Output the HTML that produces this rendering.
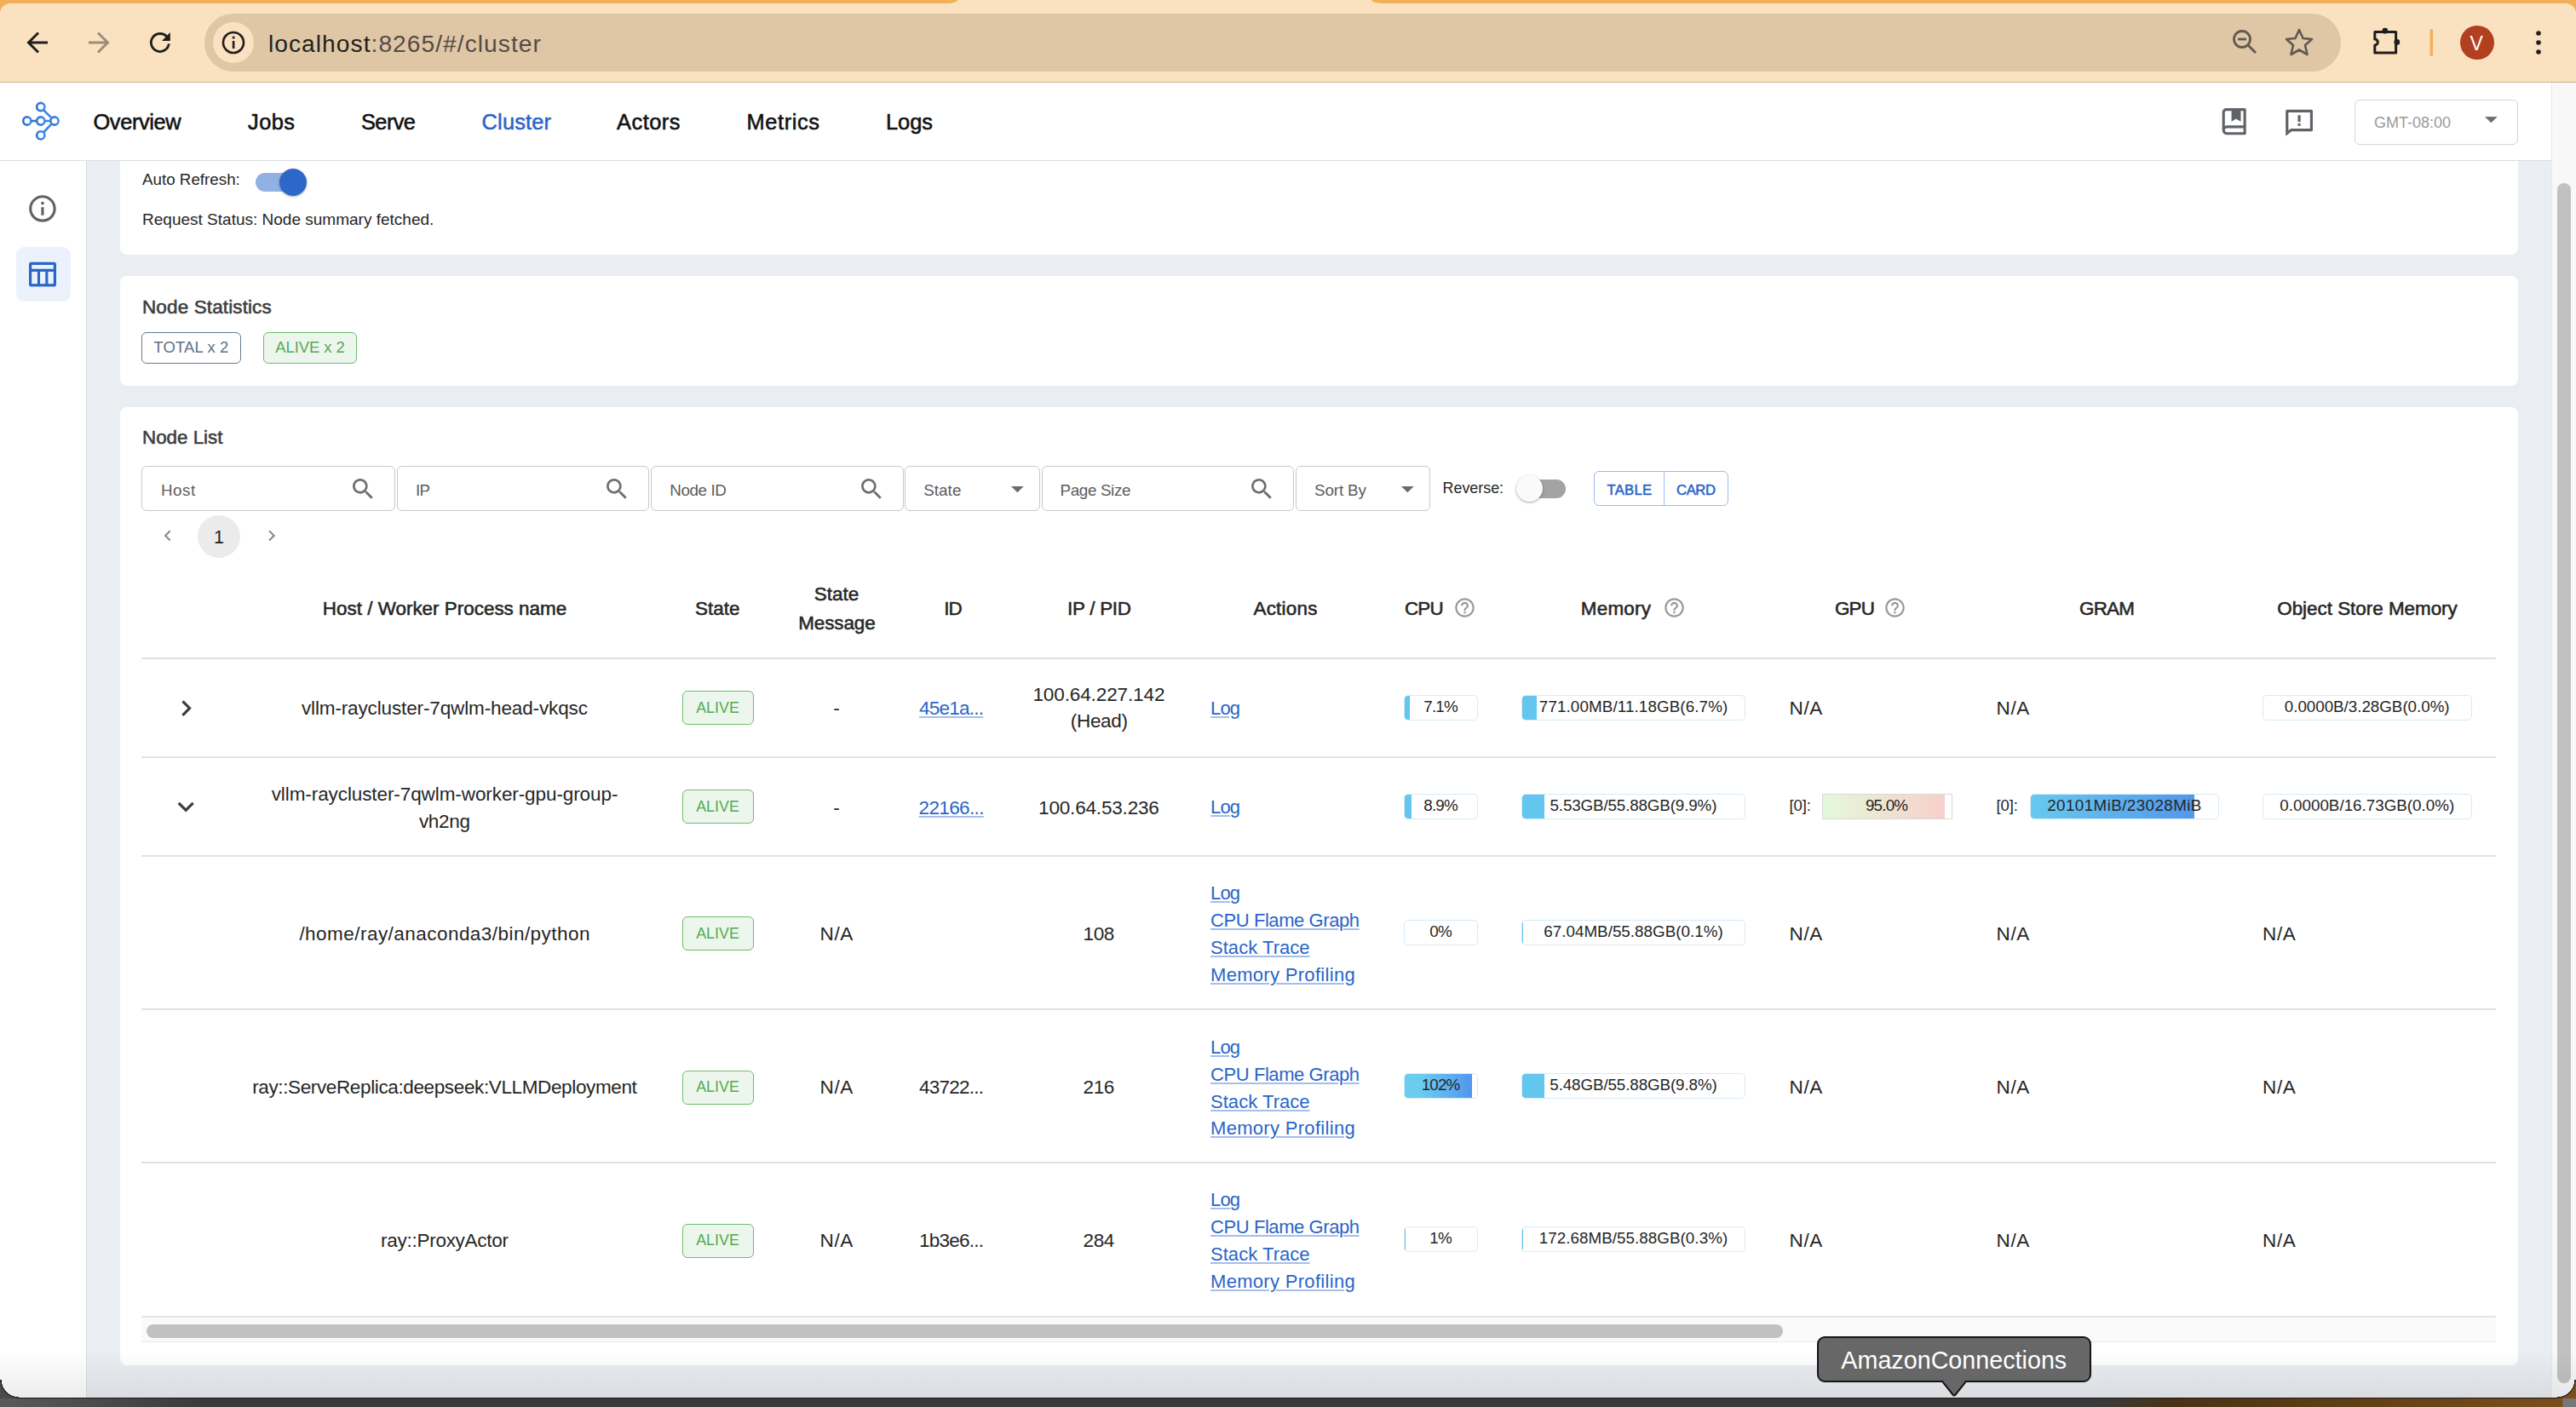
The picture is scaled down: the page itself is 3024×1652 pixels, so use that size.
<!DOCTYPE html><html><head><meta charset='utf-8'><title>Ray Dashboard</title><style>
*{box-sizing:border-box;margin:0;padding:0}
html,body{width:3024px;height:1652px;overflow:hidden;background:#3a3a3a;font-family:"Liberation Sans", sans-serif;color:#262626}
.a{position:absolute}
.t{position:absolute;white-space:nowrap;line-height:1}
.med{-webkit-text-stroke:0.55px currentColor}
.card{position:absolute;background:#fff;border-radius:8px}
.inp{position:absolute;top:547px;height:53px;border:1.3px solid #c9c9c9;border-radius:6px;background:#fff}
.chip{position:absolute;width:84px;height:40px;border:1.5px solid #6bbd6b;background:#edf6ec;border-radius:6px}
.bar{position:absolute;height:30px;border:1px solid #d6eaf8;border-radius:5px;background:#fff;overflow:hidden}
.bar .f{position:absolute;left:0;top:0;bottom:0;background:#62c6ee}
.lnk{color:#2a65c8;text-decoration:underline;text-decoration-color:rgba(42,101,200,0.42);text-underline-offset:1.8px;text-decoration-thickness:1.7px}
</style></head><body>
<div class='a' style='left:0;top:0;width:3024px;height:24px;background:#f3b05a'></div>
<div class='a' style='left:0;top:4px;width:3024px;height:93px;background:#fae1bf;border-top-left-radius:12px;border-top-right-radius:12px;border-bottom:1.5px solid #cdb48f'></div>
<div class='a' style='left:1100px;top:0;width:534px;height:6px;background:#fae1bf'></div>
<div class='a' style='left:1060px;top:0;width:64px;height:4.3px;background:#f3b05a;border-bottom-right-radius:14px 4.3px'></div>
<div class='a' style='left:1610px;top:0;width:64px;height:4.3px;background:#f3b05a;border-bottom-left-radius:14px 4.3px'></div>
<div class='a' style='left:240px;top:16px;width:2508px;height:68px;border-radius:34px;background:#dfc6a5'></div>
<div class='a' style='left:250px;top:26px;width:48px;height:48px;border-radius:50%;background:#fae1bf'></div>
<svg class='a' style='left:0;top:0' width='3024' height='97' viewBox='0 0 3024 97'>
<g fill='none' stroke='#1f1f1f' stroke-width='3'>
 <path d='M56 50 H34 M45 38.5 L33.5 50 L45 61.5'/>
</g>
<g fill='none' stroke='#9c8e7b' stroke-width='3'>
 <path d='M104 50 H126 M115 38.5 L126.5 50 L115 61.5'/>
</g>
<g fill='none' stroke='#1f1f1f' stroke-width='2.8'>
 <path d='M198.3 51.4 A10.5 10.5 0 1 1 195.9 43.2'/>
</g>
<path d='M199.8 38.1 V47.9 H190 Z' fill='#1f1f1f'/>
<circle cx='274' cy='50' r='12' fill='none' stroke='#1f1f1f' stroke-width='2.6'/>
<rect x='272.8' y='48' width='2.6' height='9' fill='#1f1f1f'/>
<circle cx='274.1' cy='44' r='1.6' fill='#1f1f1f'/>
<g fill='none' stroke='#5f5a52' stroke-width='2.8'>
 <circle cx='2632' cy='46' r='9.5'/>
 <path d='M2639 53 L2648 62'/>
 <path d='M2627 46 H2637'/>
</g>
<path d='M2699 35 L2703.5 45 L2714 46 L2706 53 L2708.5 64 L2699 58.5 L2689.5 64 L2692 53 L2684 46 L2694.5 45 Z' fill='none' stroke='#5f5a52' stroke-width='2.6' stroke-linejoin='round'/>
<path d='M2787.8 37.5 H2812.6 V62 H2787.8 V53 A3.5 3.5 0 0 0 2787.8 46 Z' fill='none' stroke='#1f1f1f' stroke-width='3' stroke-linejoin='round'/>
<circle cx='2799.8' cy='36.2' r='3.4' fill='#1f1f1f'/><circle cx='2813.8' cy='49.5' r='3.4' fill='#1f1f1f'/>
<rect x='2852.5' y='34' width='3.5' height='32' rx='1.7' fill='#f3b05a'/>
<circle cx='2908' cy='50' r='20' fill='#b23f1f'/>
<circle cx='2980' cy='39' r='2.8' fill='#1f1f1f'/><circle cx='2980' cy='50' r='2.8' fill='#1f1f1f'/><circle cx='2980' cy='61' r='2.8' fill='#1f1f1f'/>
</svg>
<div class='t' style='left:2899.5px;top:39.7px;font-size:23px;color:#fff'>V</div>
<div class='t' style='left:315.0px;top:36.9px;font-size:28.2px;letter-spacing:1.03px;color:#1f1f1f'>localhost<span style='color:#524c46'>:8265/#/cluster</span></div>
<div class='a' style='left:0;top:97px;width:2995px;height:92px;background:#fff;border-bottom:1.5px solid #d8dee6'></div>
<svg class='a' style='left:0;top:97px' width='100' height='92' viewBox='0 97 100 92'>
<defs><linearGradient id='lg' x1='0' y1='0' x2='1' y2='0'><stop offset='0' stop-color='#2f6fd0'/><stop offset='1' stop-color='#3f8fe6'/></linearGradient></defs>
<g fill='none' stroke='url(#lg)' stroke-width='2.6'>
<circle cx='47.8' cy='125.5' r='4.6'/><circle cx='31.8' cy='142' r='4.6'/><circle cx='47.8' cy='142' r='4.6'/><circle cx='64' cy='142' r='4.6'/><circle cx='47.8' cy='158.9' r='4.6'/>
<path d='M36.4 142 H43.2 M52.4 142 H59.4 M51 129 L61 139 M51 155.5 L61 145'/>
</g></svg>
<div class='t med' style='left:109.5px;top:131.4px;font-size:25.4px;letter-spacing:-0.38px;color:#111'>Overview</div>
<div class='t med' style='left:291.0px;top:131.4px;font-size:25.4px;letter-spacing:0.45px;color:#111'>Jobs</div>
<div class='t med' style='left:424.0px;top:131.4px;font-size:25.4px;letter-spacing:-0.59px;color:#111'>Serve</div>
<div class='t med' style='left:565.6px;top:131.4px;font-size:25.4px;letter-spacing:0.16px;color:#2a65c8'>Cluster</div>
<div class='t med' style='left:724.0px;top:131.4px;font-size:25.4px;letter-spacing:0.50px;color:#111'>Actors</div>
<div class='t med' style='left:876.5px;top:131.4px;font-size:25.4px;letter-spacing:0.61px;color:#111'>Metrics</div>
<div class='t med' style='left:1040.0px;top:131.4px;font-size:25.4px;letter-spacing:-0.02px;color:#111'>Logs</div>
<svg class='a' style='left:2604.3px;top:124.2px' width='37.4' height='37.4' viewBox='0 0 24 24'><path fill='#5f6368' d='M20 22H6.5A3.5 3.5 0 0 1 3 18.5V5a3 3 0 0 1 3-3h14a1 1 0 0 1 1 1v18a1 1 0 0 1-1 1zm-1-2v-3H6.5a1.5 1.5 0 0 0 0 3H19zM10 4H6a1 1 0 0 0-1 1v10.337A3.486 3.486 0 0 1 6.5 15H19V4h-2v8l-3.5-2-3.5 2V4z'/></svg>
<svg class='a' style='left:2680px;top:124px' width='38.2' height='38.2' viewBox='0 0 24 24'><path fill='#5f6368' d='M6.455 19L2 22.5V4a1 1 0 0 1 1-1h18a1 1 0 0 1 1 1v14a1 1 0 0 1-1 1H6.455zm-.692-2H20V5H4v13.385L5.763 17zM11 13h2v2h-2v-2zm0-6h2v5h-2V7z'/></svg>
<div class='a' style='left:2764px;top:117px;width:192px;height:53px;border:1.3px solid #cfd7e2;border-radius:6px'></div>
<div class='t' style='left:2787.0px;top:135.3px;font-size:18px;letter-spacing:-0.00px;color:#9a9a9a'>GMT-08:00</div>
<svg class='a' style='left:2916.6px;top:137.3px' width='15' height='8'><path d='M0 0 H14.7 L7.35 7.35 Z' fill='#707070'/></svg>
<div class='a' style='left:0;top:189px;width:102px;height:1452px;background:#fff;border-right:1.5px solid #d8dee6'></div>
<svg class='a' style='left:31.2px;top:226px' width='37.9' height='37.9' viewBox='0 0 24 24'><path fill='#5f6368' d='M11 7h2v2h-2zm0 4h2v6h-2zm1-9C6.48 2 2 6.48 2 12s4.48 10 10 10 10-4.48 10-10S17.52 2 12 2zm0 18c-4.41 0-8-3.59-8-8s3.59-8 8-8 8 3.59 8 8-3.59 8-8 8z'/></svg>
<div class='a' style='left:19px;top:290px;width:64px;height:64px;border-radius:9px;background:#ebf2fb'></div>
<svg class='a' style='left:30px;top:303px' width='40' height='40' viewBox='30 303 40 40'>
<rect x='35.6' y='309.3' width='28.8' height='25.6' rx='1.2' fill='none' stroke='#2a65c8' stroke-width='3.2'/>
<path d='M35.6 317.4 H64.4 M45.5 317.4 V335 M54.85 317.4 V335' fill='none' stroke='#2a65c8' stroke-width='3.1'/>
</svg>
<div class='a' style='left:102px;top:189px;width:2893px;height:1452px;background:#eaedf1'></div>
<div class='card' style='left:141px;top:189px;width:2815px;height:110px;border-top-left-radius:0;border-top-right-radius:0'></div>
<div class='t' style='left:167.0px;top:202.1px;font-size:18.8px;letter-spacing:0.00px;'>Auto Refresh:</div>
<div class='a' style='left:300px;top:203px;width:56px;height:22px;border-radius:11px;background:#92b1e3'></div>
<div class='a' style='left:328px;top:198px;width:32px;height:32px;border-radius:50%;background:#2d68c9;box-shadow:0 1px 3px rgba(0,0,0,0.3)'></div>
<div class='t' style='left:167.0px;top:247.9px;font-size:19.05px;letter-spacing:-0.01px;'>Request Status: Node summary fetched.</div>
<div class='card' style='left:141px;top:324px;width:2815px;height:129px'></div>
<div class='t med' style='left:167.0px;top:349.5px;font-size:22.5px;letter-spacing:0.12px;color:#3d3d3d'>Node Statistics</div>
<div class='a' style='left:166px;top:390px;width:117px;height:37px;border:1.5px solid #667b90;border-radius:6px'></div>
<div class='t' style='left:-275.6px;width:1000px;text-align:center;top:399.1px;font-size:18.5px;letter-spacing:0.12px;color:#5f7287'>TOTAL x 2</div>
<div class='a' style='left:309px;top:390px;width:110px;height:37px;border:1.5px solid #6bbd6b;background:#edf6ec;border-radius:6px'></div>
<div class='t' style='left:-136.0px;width:1000px;text-align:center;top:399.1px;font-size:18.5px;letter-spacing:-0.10px;color:#58a85b'>ALIVE x 2</div>
<div class='card' style='left:141px;top:477.5px;width:2815px;height:1125px'></div>
<div class='t med' style='left:167.0px;top:503.0px;font-size:22.4px;letter-spacing:-0.02px;color:#3d3d3d'>Node List</div>
<div class='inp' style='left:166.4px;width:297.6px'></div>
<div class='t' style='left:189.0px;top:566.6px;font-size:18.8px;letter-spacing:0.55px;color:#5c5c5c'>Host</div>
<svg class='a' style='left:409.9px;top:558px' width='32.5' height='32.5' viewBox='0 0 24 24'><path fill='#6e6e6e' d='M15.5 14h-.79l-.28-.27C15.41 12.59 16 11.11 16 9.5 16 5.91 13.09 3 9.5 3S3 5.91 3 9.5 5.91 16 9.5 16c1.61 0 3.09-.59 4.23-1.57l.27.28v.79l5 4.99L20.49 19l-4.99-5zm-6 0C7.01 14 5 11.99 5 9.5S7.01 5 9.5 5 14 7.01 14 9.5 11.99 14 9.5 14z'/></svg>
<div class='inp' style='left:465.7px;width:296.3px'></div>
<div class='t' style='left:488.0px;top:566.6px;font-size:18.8px;letter-spacing:-0.76px;color:#5c5c5c'>IP</div>
<svg class='a' style='left:707.9px;top:558px' width='32.5' height='32.5' viewBox='0 0 24 24'><path fill='#6e6e6e' d='M15.5 14h-.79l-.28-.27C15.41 12.59 16 11.11 16 9.5 16 5.91 13.09 3 9.5 3S3 5.91 3 9.5 5.91 16 9.5 16c1.61 0 3.09-.59 4.23-1.57l.27.28v.79l5 4.99L20.49 19l-4.99-5zm-6 0C7.01 14 5 11.99 5 9.5S7.01 5 9.5 5 14 7.01 14 9.5 11.99 14 9.5 14z'/></svg>
<div class='inp' style='left:764px;width:297px'></div>
<div class='t' style='left:786.3px;top:566.6px;font-size:18.8px;letter-spacing:-0.38px;color:#5c5c5c'>Node ID</div>
<svg class='a' style='left:1006.9px;top:558px' width='32.5' height='32.5' viewBox='0 0 24 24'><path fill='#6e6e6e' d='M15.5 14h-.79l-.28-.27C15.41 12.59 16 11.11 16 9.5 16 5.91 13.09 3 9.5 3S3 5.91 3 9.5 5.91 16 9.5 16c1.61 0 3.09-.59 4.23-1.57l.27.28v.79l5 4.99L20.49 19l-4.99-5zm-6 0C7.01 14 5 11.99 5 9.5S7.01 5 9.5 5 14 7.01 14 9.5 11.99 14 9.5 14z'/></svg>
<div class='inp' style='left:1062.4px;width:158.5999999999999px'></div>
<div class='t' style='left:1084.2px;top:566.6px;font-size:18.8px;letter-spacing:0.08px;color:#5c5c5c'>State</div>
<svg class='a' style='left:1186.7px;top:570.5px' width='15' height='8'><path d='M0 0 H14.7 L7.35 7.35 Z' fill='#6b6b6b'/></svg>
<div class='inp' style='left:1222.7px;width:296.29999999999995px'></div>
<div class='t' style='left:1244.5px;top:566.6px;font-size:18.8px;letter-spacing:-0.34px;color:#5c5c5c'>Page Size</div>
<svg class='a' style='left:1464.9px;top:558px' width='32.5' height='32.5' viewBox='0 0 24 24'><path fill='#6e6e6e' d='M15.5 14h-.79l-.28-.27C15.41 12.59 16 11.11 16 9.5 16 5.91 13.09 3 9.5 3S3 5.91 3 9.5 5.91 16 9.5 16c1.61 0 3.09-.59 4.23-1.57l.27.28v.79l5 4.99L20.49 19l-4.99-5zm-6 0C7.01 14 5 11.99 5 9.5S7.01 5 9.5 5 14 7.01 14 9.5 11.99 14 9.5 14z'/></svg>
<div class='inp' style='left:1521px;width:158px'></div>
<div class='t' style='left:1543.0px;top:566.6px;font-size:18.8px;letter-spacing:-0.11px;color:#5c5c5c'>Sort By</div>
<svg class='a' style='left:1644.7px;top:570.5px' width='15' height='8'><path d='M0 0 H14.7 L7.35 7.35 Z' fill='#6b6b6b'/></svg>
<div class='t' style='left:1693.6px;top:564.8px;font-size:17.9px;letter-spacing:-0.02px;'>Reverse:</div>
<div class='a' style='left:1783px;top:563px;width:55px;height:22px;border-radius:11px;background:#a3a3a3'></div>
<div class='a' style='left:1779.5px;top:558px;width:31px;height:31px;border-radius:50%;background:#fafafa;box-shadow:0 1px 3px rgba(0,0,0,0.35)'></div>
<div class='a' style='left:1871.4px;top:553.4px;width:158px;height:41px;border:1.3px solid #9dbbe8;border-radius:6px'></div>
<div class='a' style='left:1952.5px;top:553.4px;width:1.3px;height:41px;background:#9dbbe8'></div>
<div class='t med' style='left:1886.6px;top:568.2px;font-size:16.6px;letter-spacing:0.26px;color:#2a65c8'>TABLE</div>
<div class='t med' style='left:1968.0px;top:568.2px;font-size:16.6px;letter-spacing:-0.35px;color:#2a65c8'>CARD</div>
<svg class='a' style='left:182px;top:614px' width='30' height='30' viewBox='0 0 24 24'><path fill='#8a8a8a' d='M15.41 16.59L10.83 12l4.58-4.59L14 6l-6 6 6 6 1.41-1.41z' transform='scale(0.85) translate(2,2)'/></svg>
<div class='a' style='left:232px;top:604.6px;width:50px;height:50px;border-radius:50%;background:#ebebeb'></div>
<div class='t' style='left:-243.0px;width:1000px;text-align:center;top:620.6px;font-size:21.5px;color:#222'>1</div>
<svg class='a' style='left:304px;top:614px' width='30' height='30' viewBox='0 0 24 24'><path fill='#8a8a8a' d='M8.59 16.59L13.17 12 8.59 7.41 10 6l6 6-6 6-1.41-1.41z' transform='scale(0.85) translate(2,2)'/></svg>
<div class='t med' style='left:22.0px;width:1000px;text-align:center;top:704.0px;font-size:22.4px;letter-spacing:0.02px;'>Host / Worker Process name</div>
<div class='t med' style='left:342.3px;width:1000px;text-align:center;top:704.0px;font-size:22.4px;letter-spacing:0.05px;'>State</div>
<div class='t med' style='left:482.0px;width:1000px;text-align:center;top:687.4px;font-size:22.4px;letter-spacing:0.02px;'>State</div>
<div class='t med' style='left:482.4px;width:1000px;text-align:center;top:720.8px;font-size:22.4px;letter-spacing:-0.08px;'>Message</div>
<div class='t med' style='left:618.6px;width:1000px;text-align:center;top:704.0px;font-size:22.4px;letter-spacing:-0.80px;'>ID</div>
<div class='t med' style='left:790.4px;width:1000px;text-align:center;top:704.0px;font-size:22.4px;letter-spacing:-0.25px;'>IP / PID</div>
<div class='t med' style='left:1009.1px;width:1000px;text-align:center;top:704.0px;font-size:22.4px;letter-spacing:0.26px;'>Actions</div>
<div class='t med' style='left:1649.0px;top:704.0px;font-size:22.4px;letter-spacing:-0.80px;'>CPU</div>
<svg class='a' style='left:1705.9px;top:700.2px' width='27.0' height='27.0' viewBox='0 0 24 24'><path fill='#9a9a9a' d='M11 18h2v-2h-2v2zm1-16C6.48 2 2 6.48 2 12s4.48 10 10 10 10-4.48 10-10S17.52 2 12 2zm0 18c-4.41 0-8-3.59-8-8s3.59-8 8-8 8 3.59 8 8-3.59 8-8 8zm0-14c-2.21 0-4 1.79-4 4h2c0-1.1.9-2 2-2s2 .9 2 2c0 2-3 1.75-3 5h2c0-2.25 3-2.5 3-5 0-2.21-1.79-4-4-4z'/></svg>
<div class='t med' style='left:1855.8px;top:704.0px;font-size:22.4px;letter-spacing:0.26px;'>Memory</div>
<svg class='a' style='left:1951.5px;top:700.2px' width='27.0' height='27.0' viewBox='0 0 24 24'><path fill='#9a9a9a' d='M11 18h2v-2h-2v2zm1-16C6.48 2 2 6.48 2 12s4.48 10 10 10 10-4.48 10-10S17.52 2 12 2zm0 18c-4.41 0-8-3.59-8-8s3.59-8 8-8 8 3.59 8 8-3.59 8-8 8zm0-14c-2.21 0-4 1.79-4 4h2c0-1.1.9-2 2-2s2 .9 2 2c0 2-3 1.75-3 5h2c0-2.25 3-2.5 3-5 0-2.21-1.79-4-4-4z'/></svg>
<div class='t med' style='left:2154.0px;top:704.0px;font-size:22.4px;letter-spacing:-0.80px;'>GPU</div>
<svg class='a' style='left:2211.2px;top:700.2px' width='27.0' height='27.0' viewBox='0 0 24 24'><path fill='#9a9a9a' d='M11 18h2v-2h-2v2zm1-16C6.48 2 2 6.48 2 12s4.48 10 10 10 10-4.48 10-10S17.52 2 12 2zm0 18c-4.41 0-8-3.59-8-8s3.59-8 8-8 8 3.59 8 8-3.59 8-8 8zm0-14c-2.21 0-4 1.79-4 4h2c0-1.1.9-2 2-2s2 .9 2 2c0 2-3 1.75-3 5h2c0-2.25 3-2.5 3-5 0-2.21-1.79-4-4-4z'/></svg>
<div class='t med' style='left:1973.1px;width:1000px;text-align:center;top:704.0px;font-size:22.4px;letter-spacing:-0.80px;'>GRAM</div>
<div class='t med' style='left:2279.0px;width:1000px;text-align:center;top:704.0px;font-size:22.4px;letter-spacing:-0.00px;'>Object Store Memory</div>
<div class='a' style='left:166px;top:772.4px;width:2764px;height:1.3px;background:#e2e2e2'></div>
<div class='a' style='left:166px;top:888.4px;width:2764px;height:1.3px;background:#e2e2e2'></div>
<div class='a' style='left:166px;top:1004.4px;width:2764px;height:1.3px;background:#e2e2e2'></div>
<div class='a' style='left:166px;top:1184.3px;width:2764px;height:1.3px;background:#e2e2e2'></div>
<div class='a' style='left:166px;top:1364.3px;width:2764px;height:1.3px;background:#e2e2e2'></div>
<div class='a' style='left:166px;top:1544.8px;width:2764px;height:1.3px;background:#e2e2e2'></div>
<svg class='a' style='left:199.7px;top:812.6px' width='37.2' height='37.2' viewBox='0 0 24 24'><path fill='#3c3c3c' d='M8.59 16.59L13.17 12 8.59 7.41 10 6l6 6-6 6-1.41-1.41z'/></svg>
<div class='t' style='left:21.9px;width:1000px;text-align:center;top:821.0px;font-size:22.5px;letter-spacing:-0.13px;'>vllm-raycluster-7qwlm-head-vkqsc</div>
<div class='chip' style='left:800.5px;top:811.4px'></div><div class='t' style='left:342.5px;width:1000px;text-align:center;top:822.9px;font-size:17.8px;letter-spacing:0.03px;color:#4fab52'>ALIVE</div>
<div class='t' style='left:482.0px;width:1000px;text-align:center;top:821.0px;font-size:22.5px;'>-</div>
<div class='t' style='left:616.6px;width:1000px;text-align:center;top:821.0px;font-size:22.5px;letter-spacing:-0.76px;'><span class='lnk'>45e1a...</span></div>
<div class='t' style='left:789.9px;width:1000px;text-align:center;top:805.0px;font-size:22.5px;letter-spacing:-0.11px;'>100.64.227.142</div>
<div class='t' style='left:790.2px;width:1000px;text-align:center;top:836.0px;font-size:22.5px;letter-spacing:-0.35px;'>(Head)</div>
<div class='t' style='left:1421.0px;top:820.6px;font-size:22.0px;letter-spacing:-0.80px;'><span class='lnk'>Log</span></div>
<div class='bar' style='left:1648px;top:816.0px;width:87.0px'><div class='f' style='width:7.1%;background:#62c6ee'></div></div><div class='t' style='left:1191.1px;width:1000px;text-align:center;top:821.4px;font-size:18.8px;letter-spacing:-0.80px;'>7.1%</div>
<div class='bar' style='left:1786px;top:816.0px;width:263.0px'><div class='f' style='width:6.7%;background:#62c6ee'></div></div><div class='t' style='left:1417.6px;width:1000px;text-align:center;top:821.4px;font-size:18.8px;letter-spacing:0.12px;'>771.00MB/11.18GB(6.7%)</div>
<div class='t' style='left:2100.5px;top:821.0px;font-size:22.5px;letter-spacing:0.65px;'>N/A</div>
<div class='t' style='left:2343.5px;top:821.0px;font-size:22.5px;letter-spacing:0.65px;'>N/A</div>
<div class='bar' style='left:2655.5px;top:816.0px;width:246.5px'><div class='f' style='width:0%;background:#62c6ee'></div></div><div class='t' style='left:2278.7px;width:1000px;text-align:center;top:821.4px;font-size:18.8px;letter-spacing:-0.02px;'>0.0000B/3.28GB(0.0%)</div>
<svg class='a' style='left:199.2px;top:927.7px' width='38.4' height='38.4' viewBox='0 0 24 24'><path fill='#3c3c3c' d='M7.41 8.59L12 13.17l4.59-4.58L18 10l-6 6-6-6 1.41-1.41z'/></svg>
<div class='t' style='left:22.0px;width:1000px;text-align:center;top:922.0px;font-size:22.5px;letter-spacing:-0.09px;'>vllm-raycluster-7qwlm-worker-gpu-group-</div>
<div class='t' style='left:21.8px;width:1000px;text-align:center;top:954.0px;font-size:22.5px;letter-spacing:-0.32px;'>vh2ng</div>
<div class='chip' style='left:800.5px;top:927.4px'></div><div class='t' style='left:342.5px;width:1000px;text-align:center;top:938.9px;font-size:17.8px;letter-spacing:0.03px;color:#4fab52'>ALIVE</div>
<div class='t' style='left:482.0px;width:1000px;text-align:center;top:937.7px;font-size:22.5px;'>-</div>
<div class='t' style='left:616.7px;width:1000px;text-align:center;top:937.7px;font-size:22.5px;letter-spacing:-0.63px;'><span class='lnk'>22166...</span></div>
<div class='t' style='left:789.9px;width:1000px;text-align:center;top:937.7px;font-size:22.5px;letter-spacing:-0.18px;'>100.64.53.236</div>
<div class='t' style='left:1421.0px;top:937.3px;font-size:22.0px;letter-spacing:-0.80px;'><span class='lnk'>Log</span></div>
<div class='bar' style='left:1648px;top:932.0px;width:87.0px'><div class='f' style='width:8.9%;background:#62c6ee'></div></div><div class='t' style='left:1191.1px;width:1000px;text-align:center;top:937.4px;font-size:18.8px;letter-spacing:-0.80px;'>8.9%</div>
<div class='bar' style='left:1786px;top:932.0px;width:263.0px'><div class='f' style='width:9.9%;background:#62c6ee'></div></div><div class='t' style='left:1417.4px;width:1000px;text-align:center;top:937.4px;font-size:18.8px;letter-spacing:-0.13px;'>5.53GB/55.88GB(9.9%)</div>
<div class='t' style='left:2100.5px;top:937.3px;font-size:18.5px;letter-spacing:-0.07px;'>[0]:</div>
<div class='a' style='left:2139px;top:932.4px;width:152.5px;height:30px;border:1.3px solid #d8d8d8;background:#fff'><div class='a' style='left:0;top:0;bottom:0;width:95%;background:linear-gradient(90deg,#e4f9d9,#f7cfcb)'></div></div>
<div class='t' style='left:1714.6px;width:1000px;text-align:center;top:937.4px;font-size:18.8px;letter-spacing:-0.80px;'>95.0%</div>
<div class='t' style='left:2343.5px;top:937.3px;font-size:18.5px;letter-spacing:-0.07px;'>[0]:</div>
<div class='bar' style='left:2382.5px;top:932.0px;width:222.5px'><div class='f' style='width:87.3%;background:linear-gradient(90deg,#66c9ef,#5497ec)'></div></div><div class='t' style='left:1994.0px;width:1000px;text-align:center;top:937.4px;font-size:18.8px;letter-spacing:0.42px;'>20101MiB/23028MiB</div>
<div class='bar' style='left:2655.5px;top:932.0px;width:246.5px'><div class='f' style='width:0%;background:#62c6ee'></div></div><div class='t' style='left:2278.8px;width:1000px;text-align:center;top:937.4px;font-size:18.8px;letter-spacing:0.01px;'>0.0000B/16.73GB(0.0%)</div>
<div class='t' style='left:22.2px;width:1000px;text-align:center;top:1086.0px;font-size:22.5px;letter-spacing:0.46px;'>/home/ray/anaconda3/bin/python</div>
<div class='chip' style='left:800.5px;top:1076.4px'></div><div class='t' style='left:342.5px;width:1000px;text-align:center;top:1087.9px;font-size:17.8px;letter-spacing:0.03px;color:#4fab52'>ALIVE</div>
<div class='t' style='left:482.3px;width:1000px;text-align:center;top:1086.0px;font-size:22.5px;letter-spacing:0.65px;'>N/A</div>
<div class='t' style='left:789.8px;width:1000px;text-align:center;top:1086.0px;font-size:22.5px;letter-spacing:-0.37px;'>108</div>
<div class='t' style='left:1421.0px;top:1038.2px;font-size:22.0px;letter-spacing:-0.80px;'><span class='lnk'>Log</span></div><div class='t' style='left:1421.0px;top:1070.4px;font-size:22.0px;letter-spacing:-0.42px;'><span class='lnk'>CPU Flame Graph</span></div><div class='t' style='left:1421.0px;top:1102.3px;font-size:22.0px;letter-spacing:0.04px;'><span class='lnk'>Stack Trace</span></div><div class='t' style='left:1421.0px;top:1134.1px;font-size:22.0px;letter-spacing:0.31px;'><span class='lnk'>Memory Profiling</span></div>
<div class='bar' style='left:1648px;top:1080.0px;width:87.0px'><div class='f' style='width:0%;background:#62c6ee'></div></div><div class='t' style='left:1191.1px;width:1000px;text-align:center;top:1085.4px;font-size:18.8px;letter-spacing:-0.80px;'>0%</div>
<div class='bar' style='left:1786px;top:1080.0px;width:263.0px'><div class='f' style='width:0.1%;background:#62c6ee'></div></div><div class='t' style='left:1417.5px;width:1000px;text-align:center;top:1085.4px;font-size:18.8px;letter-spacing:0.03px;'>67.04MB/55.88GB(0.1%)</div>
<div class='t' style='left:2100.5px;top:1086.0px;font-size:22.5px;letter-spacing:0.65px;'>N/A</div>
<div class='t' style='left:2343.5px;top:1086.0px;font-size:22.5px;letter-spacing:0.65px;'>N/A</div>
<div class='t' style='left:2656.0px;top:1086.0px;font-size:22.5px;letter-spacing:0.65px;'>N/A</div>
<div class='t' style='left:21.8px;width:1000px;text-align:center;top:1266.0px;font-size:22.5px;letter-spacing:-0.37px;'>ray::ServeReplica:deepseek:VLLMDeployment</div>
<div class='chip' style='left:800.5px;top:1256.5px'></div><div class='t' style='left:342.5px;width:1000px;text-align:center;top:1268.0px;font-size:17.8px;letter-spacing:0.03px;color:#4fab52'>ALIVE</div>
<div class='t' style='left:482.3px;width:1000px;text-align:center;top:1266.0px;font-size:22.5px;letter-spacing:0.65px;'>N/A</div>
<div class='t' style='left:616.6px;width:1000px;text-align:center;top:1266.0px;font-size:22.5px;letter-spacing:-0.76px;'>43722...</div>
<div class='t' style='left:789.8px;width:1000px;text-align:center;top:1266.0px;font-size:22.5px;letter-spacing:-0.37px;'>216</div>
<div class='t' style='left:1421.0px;top:1218.6px;font-size:22.0px;letter-spacing:-0.80px;'><span class='lnk'>Log</span></div><div class='t' style='left:1421.0px;top:1250.6px;font-size:22.0px;letter-spacing:-0.42px;'><span class='lnk'>CPU Flame Graph</span></div><div class='t' style='left:1421.0px;top:1282.6px;font-size:22.0px;letter-spacing:0.04px;'><span class='lnk'>Stack Trace</span></div><div class='t' style='left:1421.0px;top:1314.2px;font-size:22.0px;letter-spacing:0.31px;'><span class='lnk'>Memory Profiling</span></div>
<div class='bar' style='left:1648px;top:1260.0px;width:87.0px'><div class='f' style='width:93%;background:linear-gradient(90deg,#6accef 25%,#5296ed)'></div></div><div class='t' style='left:1191.1px;width:1000px;text-align:center;top:1265.4px;font-size:18.8px;letter-spacing:-0.80px;'>102%</div>
<div class='bar' style='left:1786px;top:1260.0px;width:263.0px'><div class='f' style='width:9.8%;background:#62c6ee'></div></div><div class='t' style='left:1417.5px;width:1000px;text-align:center;top:1265.4px;font-size:18.8px;letter-spacing:-0.10px;'>5.48GB/55.88GB(9.8%)</div>
<div class='t' style='left:2100.5px;top:1266.0px;font-size:22.5px;letter-spacing:0.65px;'>N/A</div>
<div class='t' style='left:2343.5px;top:1266.0px;font-size:22.5px;letter-spacing:0.65px;'>N/A</div>
<div class='t' style='left:2656.0px;top:1266.0px;font-size:22.5px;letter-spacing:0.65px;'>N/A</div>
<div class='t' style='left:21.9px;width:1000px;text-align:center;top:1446.0px;font-size:22.5px;letter-spacing:-0.27px;'>ray::ProxyActor</div>
<div class='chip' style='left:800.5px;top:1436.6px'></div><div class='t' style='left:342.5px;width:1000px;text-align:center;top:1448.1px;font-size:17.8px;letter-spacing:0.03px;color:#4fab52'>ALIVE</div>
<div class='t' style='left:482.3px;width:1000px;text-align:center;top:1446.0px;font-size:22.5px;letter-spacing:0.65px;'>N/A</div>
<div class='t' style='left:616.6px;width:1000px;text-align:center;top:1446.0px;font-size:22.5px;letter-spacing:-0.76px;'>1b3e6...</div>
<div class='t' style='left:789.8px;width:1000px;text-align:center;top:1446.0px;font-size:22.5px;letter-spacing:-0.37px;'>284</div>
<div class='t' style='left:1421.0px;top:1398.4px;font-size:22.0px;letter-spacing:-0.80px;'><span class='lnk'>Log</span></div><div class='t' style='left:1421.0px;top:1430.4px;font-size:22.0px;letter-spacing:-0.42px;'><span class='lnk'>CPU Flame Graph</span></div><div class='t' style='left:1421.0px;top:1462.4px;font-size:22.0px;letter-spacing:0.04px;'><span class='lnk'>Stack Trace</span></div><div class='t' style='left:1421.0px;top:1494.2px;font-size:22.0px;letter-spacing:0.31px;'><span class='lnk'>Memory Profiling</span></div>
<div class='bar' style='left:1648px;top:1440.0px;width:87.0px'><div class='f' style='width:1%;background:#62c6ee'></div></div><div class='t' style='left:1191.1px;width:1000px;text-align:center;top:1445.4px;font-size:18.8px;letter-spacing:-0.80px;'>1%</div>
<div class='bar' style='left:1786px;top:1440.0px;width:263.0px'><div class='f' style='width:0.3%;background:#62c6ee'></div></div><div class='t' style='left:1417.5px;width:1000px;text-align:center;top:1445.4px;font-size:18.8px;letter-spacing:0.05px;'>172.68MB/55.88GB(0.3%)</div>
<div class='t' style='left:2100.5px;top:1446.0px;font-size:22.5px;letter-spacing:0.65px;'>N/A</div>
<div class='t' style='left:2343.5px;top:1446.0px;font-size:22.5px;letter-spacing:0.65px;'>N/A</div>
<div class='t' style='left:2656.0px;top:1446.0px;font-size:22.5px;letter-spacing:0.65px;'>N/A</div>
<div class='a' style='left:166px;top:1546px;width:2764px;height:30px;background:#fafafa;border-top:1.5px solid #e6e6e6;border-bottom:1.5px solid #ececec'></div>
<div class='a' style='left:172.4px;top:1555.4px;width:1920.6px;height:15.3px;border-radius:8px;background:#c1c1c1'></div>
<div class='a' style='left:2995px;top:97px;width:29px;height:1544px;background:#f8f8f8;border-left:1.5px solid #e8e8e8'></div>
<div class='a' style='left:3002px;top:215px;width:15.6px;height:1409px;border-radius:8px;background:#c1c1c1'></div>
<div class='a' style='left:0;top:1585px;width:3024px;height:56px;background:linear-gradient(rgba(0,0,0,0),rgba(0,0,0,0.07))'></div>
<div class='a' style='left:0;top:1641px;width:3024px;height:11px;background:linear-gradient(90deg,#5a5a5a,#3a3a3a 8%,#3a3a3a)'></div>
<div class='a' style='left:2460px;top:1641px;width:564px;height:11px;background:linear-gradient(90deg,#3a3a3a,#4a3216 16%,#5e3e16 50%,#7a4f1e 97.2%,#777 97.3%)'></div>
<div class='a' style='left:0;top:1641px;width:3024px;height:1.2px;background:#151515'></div>
<div class='a' style='left:0;top:1620px;width:22px;height:22px;background:radial-gradient(circle at 100% 0,transparent 20px,#111 20.5px,#4a4a4a 22px)'></div>
<div class='a' style='left:3002px;top:1620px;width:22px;height:22px;background:radial-gradient(circle at 0 0,transparent 20px,#111 20.5px,#7a4f1e 22px)'></div>
<div class='a' style='left:2132.6px;top:1568.5px;width:322.4px;height:54.5px;background:#676767;border:2.2px solid #151515;border-radius:9px'></div>
<svg class='a' style='left:2280px;top:1621px' width='28' height='20'><path d='M0 1 L12.5 16.5 Q14 18.3 15.5 16.5 L28 1' fill='#676767' stroke='#151515' stroke-width='2'/><rect x='1.5' y='-2' width='25' height='4' fill='#676767'/></svg>
<div class='t' style='left:1793.8px;width:1000px;text-align:center;top:1582.7px;font-size:28.7px;letter-spacing:0.01px;color:#fff'>AmazonConnections</div>
</body></html>
